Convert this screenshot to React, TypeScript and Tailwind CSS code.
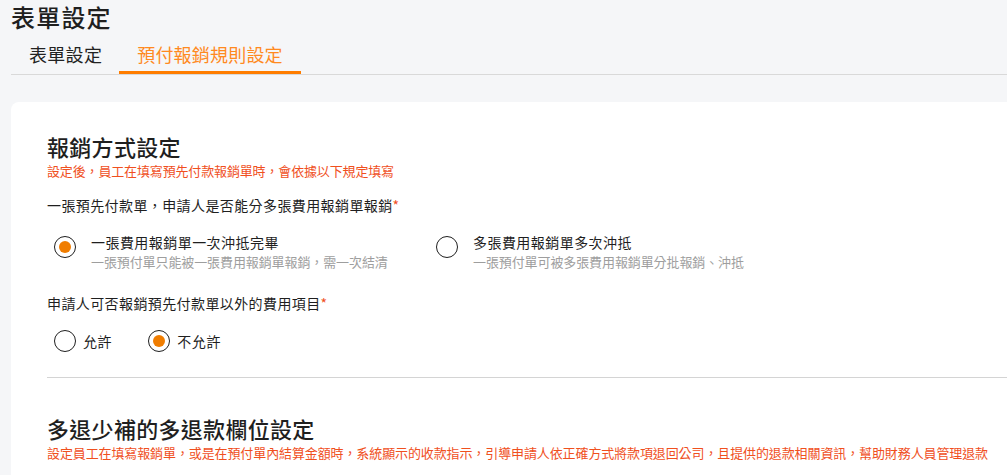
import React from "react";

const FONT = '"Noto Sans CJK TC", "Noto Sans CJK SC", "Noto Sans", sans-serif';

function Radio({ checked }: { checked: boolean }) {
  return (
    <span className="flex h-[22px] w-[22px] shrink-0 items-center justify-center rounded-full border-[1.5px] border-[#1f1f1f] bg-white">
      {checked && <span className="h-[12px] w-[12px] rounded-full bg-[#f07d00]" />}
    </span>
  );
}

export default function App() {
  return (
    <div
      className="min-h-[475px] w-full overflow-hidden bg-[#f5f6f8] pl-[11px] text-[#1f1f1f]"
      style={{ fontFamily: FONT }}
    >
      <h1 className="pt-[1px] text-[24px] font-medium leading-[31px] tracking-[1.2px]">表單設定</h1>

      <div className="flex border-b border-[#d9d9d9] w-[1100px]">
        <div className="border-b-[3px] border-transparent pb-[5px] pl-[18px] pr-[17px] pt-[10px] text-[18px] leading-[24px] tracking-[0.3px] text-[#222]">
          表單設定
        </div>
        <div className="border-b-[3px] border-[#ff7d00] pb-[5px] px-[18px] pt-[10px] text-[18px] leading-[24px] tracking-[0.2px] text-[#ff8a1f]">
          預付報銷規則設定
        </div>
      </div>

      <div className="mt-[27px] w-[1100px] rounded-l-[8px] bg-white pl-[36px] pt-[29px] pb-[20px]">
        <h2 className="text-[22px] font-medium leading-[30px] tracking-[0.3px]">報銷方式設定</h2>
        <p className="text-[13px] leading-[20px] tracking-[-0.15px] text-[#f0501e]">
          設定後，員工在填寫預先付款報銷單時，會依據以下規定填寫
        </p>

        <p className="mt-[14px] text-[14px] leading-[20px] tracking-[0.4px]">
          一張預先付款單，申請人是否能分多張費用報銷單報銷<span className="text-[#f0501e]">*</span>
        </p>

        <div className="mt-[17px] flex pl-[7px]">
          <div className="flex w-[382px] items-start gap-[15px]">
            <span className="mt-[4px]">
              <Radio checked />
            </span>
            <div>
              <div className="text-[14px] leading-[20px] tracking-[0.45px]">一張費用報銷單一次沖抵完畢</div>
              <div className="text-[13px] leading-[20px] tracking-[-0.1px] text-[#9e9e9e]">一張預付單只能被一張費用報銷單報銷，需一次結清</div>
            </div>
          </div>
          <div className="flex items-start gap-[15px]">
            <span className="mt-[4px]">
              <Radio checked={false} />
            </span>
            <div>
              <div className="text-[14px] leading-[20px] tracking-[0.45px]">多張費用報銷單多次沖抵</div>
              <div className="text-[13px] leading-[20px] tracking-[-0.1px] text-[#9e9e9e]">一張預付單可被多張費用報銷單分批報銷、沖抵</div>
            </div>
          </div>
        </div>

        <p className="mt-[21px] text-[14px] leading-[20px] tracking-[0.4px]">
          申請人可否報銷預先付款單以外的費用項目<span className="text-[#f0501e]">*</span>
        </p>

        <div className="mt-[17px] flex items-center pl-[7px]">
          <div className="flex items-center gap-[7px]">
            <Radio checked={false} />
            <span className="text-[14px] leading-[20px] tracking-[0.6px]">允許</span>
          </div>
          <div className="ml-[36px] flex items-center gap-[7px]">
            <Radio checked />
            <span className="text-[14px] leading-[20px] tracking-[0.6px]">不允許</span>
          </div>
        </div>

        <div className="mt-[25px] border-t border-[#d4d4d4]" />

        <h2 className="mt-[35px] text-[22px] font-medium leading-[30px] tracking-[0.3px]">多退少補的多退款欄位設定</h2>
        <p className="whitespace-nowrap text-[13px] leading-[20px] tracking-[-0.11px] text-[#f0501e]">
          設定員工在填寫報銷單，或是在預付單內結算金額時，系統顯示的收款指示，引導申請人依正確方式將款項退回公司，且提供的退款相關資訊，幫助財務人員管理退款
        </p>
      </div>
    </div>
  );
}
